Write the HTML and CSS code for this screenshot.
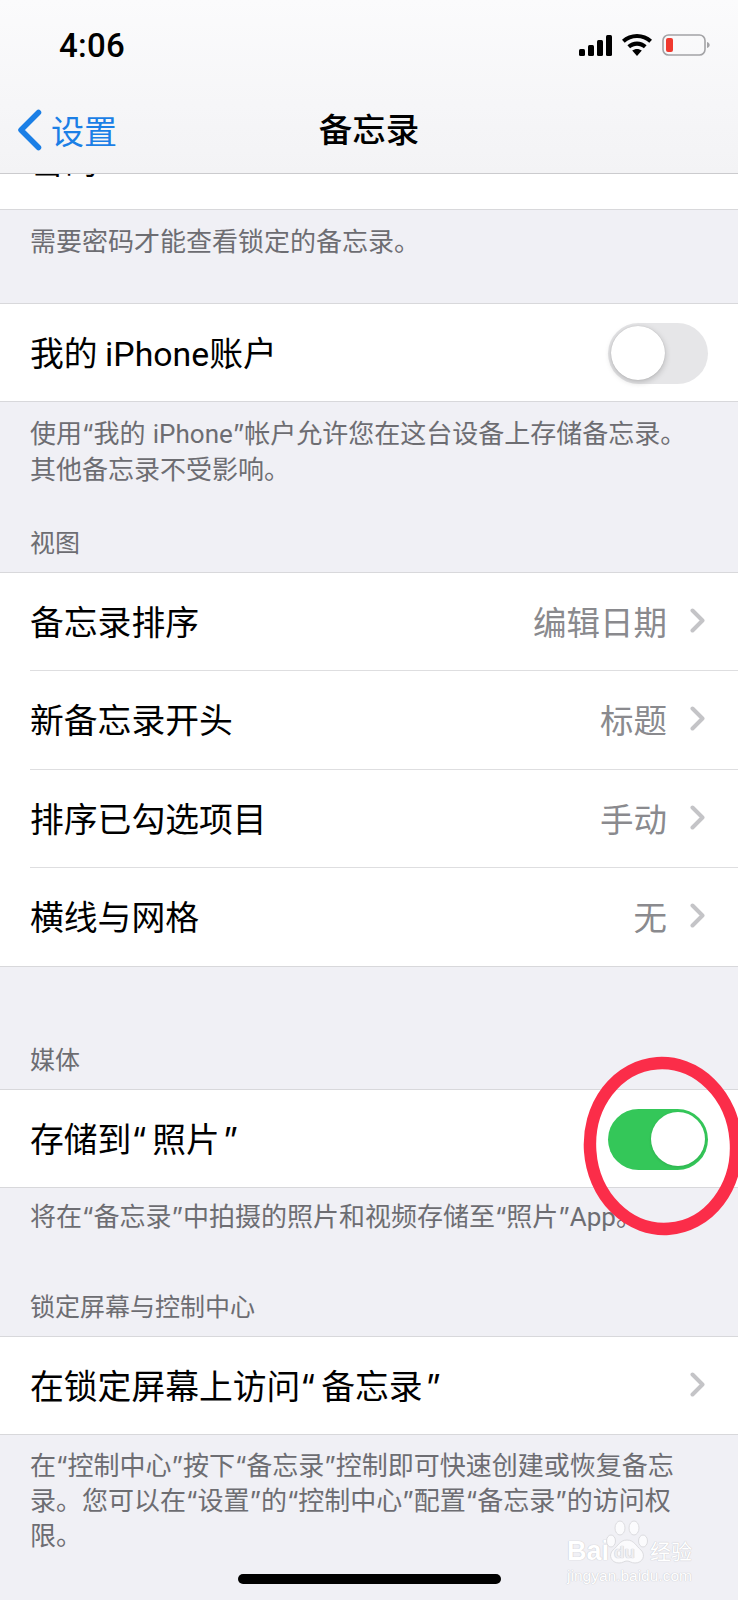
FILE: index.html
```html
<!DOCTYPE html>
<html lang="zh-CN">
<head>
<meta charset="utf-8">
<title>备忘录</title>
<link rel="stylesheet" href="styles.css">
</head>
<body>
<div class="screen">
  <header class="topbar">
    <div class="status">
      <span class="time">4:06</span>
      <div class="status-icons">
        <svg class="signal" viewBox="0 0 33 21" width="33" height="21"><rect x="0" y="14" width="6" height="7" rx="1.5"/><rect x="9" y="10" width="6" height="11" rx="1.5"/><rect x="18" y="5" width="6" height="16" rx="1.5"/><rect x="27" y="0" width="6" height="21" rx="1.5"/></svg>
        <svg class="wifi" viewBox="0 0 30 22" width="30" height="22"><path d="M15 22l-4.8-5.4c2.8-2.2 6.8-2.2 9.6 0z"/><path d="M15 7.6c3.7 0 7 1.4 9.6 3.7l-2.7 3c-1.9-1.6-4.3-2.6-6.9-2.6s-5 1-6.9 2.6l-2.7-3C8 9 11.300 7.600 15 7.600z"/><path d="M15 0c5.800 0 11 2.200 15 5.800l-2.700 3C24 5.800 19.700 4 15 4S6 5.800 2.700 8.800L0 5.800C4 2.200 9.200 0 15 0z"/></svg>
        <svg class="battery" viewBox="0 0 48 22" width="48" height="22"><rect x="1" y="1" width="42" height="20" rx="5.500" fill="none" stroke="#a3a3a6" stroke-width="1.600"/><rect x="4" y="4" width="7" height="14" rx="2" fill="#f0392f"/><path d="M45 8c1.800.5 2.700 1.700 2.700 3s-.9 2.500-2.700 3z" fill="#a3a3a6"/></svg>
      </div>
    </div>
    <nav class="nav">
      <a class="back">
        <svg viewBox="0 0 26 42" width="26" height="42"><path d="M22.500 3.500L5 21l17.500 17.500" fill="none" stroke="currentColor" stroke-width="5.500" stroke-linecap="round" stroke-linejoin="round"/></svg>
        <span>设置</span>
      </a>
      <h1 class="title">备忘录</h1>
    </nav>
  </header>

  <main>
    <div class="clipped-row"><span>密码</span></div>
    <p class="note note-first">需要密码才能查看锁定的备忘录。</p>

    <section class="group group-account">
      <div class="row">
        <span class="label">我的 <span class="latin">iPhone</span>账户</span>
        <span class="switch"><span class="knob"></span></span>
      </div>
    </section>
    <p class="note">使用“我的 <span class="latin">iPhone</span>”帐户允许您在这台设备上存储备忘录。<br>其他备忘录不受影响。</p>

    <h2 class="caption caption-view">视图</h2>
    <section class="group">
      <div class="row inset">
        <span class="label">备忘录排序</span>
        <span class="value">编辑日期</span>
        <svg class="chev" viewBox="0 0 16 25" width="16" height="25"><path d="M2.500 2.500l10 10-10 10" /></svg>
      </div>
      <div class="row inset">
        <span class="label">新备忘录开头</span>
        <span class="value">标题</span>
        <svg class="chev" viewBox="0 0 16 25" width="16" height="25"><path d="M2.500 2.500l10 10-10 10" /></svg>
      </div>
      <div class="row inset">
        <span class="label">排序已勾选项目</span>
        <span class="value">手动</span>
        <svg class="chev" viewBox="0 0 16 25" width="16" height="25"><path d="M2.500 2.500l10 10-10 10" /></svg>
      </div>
      <div class="row inset">
        <span class="label">横线与网格</span>
        <span class="value">无</span>
        <svg class="chev" viewBox="0 0 16 25" width="16" height="25"><path d="M2.500 2.500l10 10-10 10" /></svg>
      </div>
    </section>

    <h2 class="caption caption-media">媒体</h2>
    <section class="group">
      <div class="row">
        <span class="label">存储到“<span class="quoted">照片</span>”</span>
        <span class="switch on"><span class="knob"></span></span>
      </div>
    </section>
    <p class="note note-single">将在“备忘录”中拍摄的照片和视频存储至“照片”<span class="latin">App</span>。</p>

    <h2 class="caption caption-lock">锁定屏幕与控制中心</h2>
    <section class="group">
      <div class="row">
        <span class="label">在锁定屏幕上访问“<span class="quoted">备忘录</span>”</span>
        <svg class="chev" viewBox="0 0 16 25" width="16" height="25"><path d="M2.500 2.500l10 10-10 10" /></svg>
      </div>
    </section>
    <p class="note note-last">在“控制中心”按下“备忘录”控制即可快速创建或恢复备忘录。您可以在“设置”的“控制中心”配置“备忘录”的访问权限。</p>
  </main>

  <svg class="ring" viewBox="0 0 160 182" width="160" height="182"><ellipse cx="81" cy="90" rx="73" ry="83" fill="none" stroke="#fb2d49" stroke-width="12.500" transform="rotate(-4 81 90)"/></svg>

  <div class="watermark">
    <div class="wm-logo">
      <span class="wm-bai">Bai</span>
      <span class="wm-paw">
        <svg viewBox="0 0 44 50" width="44" height="50"><g fill="#fff" fill-opacity=".75" stroke="#dcdce0" stroke-width="1"><ellipse cx="6" cy="21" rx="4.500" ry="6"/><ellipse cx="15" cy="8" rx="5" ry="7"/><ellipse cx="29" cy="8" rx="5" ry="7"/><ellipse cx="38" cy="21" rx="4.500" ry="6"/><path d="M22 20c7 0 9 6 14 10 5 5 2 13-6 13-4 0-5-2-8-2s-4 2-8 2c-8 0-11-8-6-13 5-4 7-10 14-10z"/></g></svg>
        <span class="wm-du">du</span>
      </span>
      <span class="wm-jy">经验</span>
    </div>
    <div class="wm-url">jingyan.baidu.com</div>
  </div>

  <div class="home-bar"></div>
</div>
</body>
</html>
```

FILE: styles.css
```css
* { box-sizing: border-box; }
html, body { margin: 0; padding: 0; }
body {
  width: 738px;
  height: 1600px;
  overflow: hidden;
  background: #f0f0f5;
  font-family: Inter, "Noto Sans CJK SC", sans-serif;
  color: #000;
}
.screen { position: relative; width: 738px; height: 1600px; overflow: hidden; background: #f0f0f5; }
.latin { font-family: Roboto, sans-serif; }
.label .latin { margin-left: -2px; }
.quoted { margin: 0 3px 0 6px; }

.topbar {
  height: 174px;
  background: linear-gradient(#fbfbfc, #f6f6f8 60%, #f3f3f5);
  border-bottom: 1px solid #cbcbce;
  display: flex;
  flex-direction: column;
}
.status {
  height: 90px;
  display: flex;
  align-items: center;
  justify-content: space-between;
  padding: 0 28px 0 59px;
}
.time { font-family: Roboto, sans-serif; font-size: 33px; font-weight: 500; letter-spacing: .3px; color: #000; }
.status-icons { display: flex; align-items: center; gap: 10px; }
.signal, .wifi { fill: #000; display: block; }
.battery { display: block; }

.nav {
  position: relative;
  flex: 1;
  display: flex;
  align-items: center;
  justify-content: center;
  padding-bottom: 4px;
}
.back {
  position: absolute;
  left: 16px;
  top: 16px;
  display: flex;
  align-items: center;
  gap: 9px;
  color: #1b7fe6;
  font-size: 33px;
}
.back svg { display: block; }
.title { margin: 0; font-size: 33.500px; font-weight: 500; line-height: 40px; }

.clipped-row {
  height: 36px;
  background: #fff;
  border-bottom: 1px solid #d8d8db;
  overflow: hidden;
  padding-left: 30px;
  font-size: 34px;
  line-height: 40px;
}
.clipped-row span { display: block; margin-top: -32px; }

.note {
  margin: 0;
  padding: 14px 30px 0;
  font-size: 26px;
  line-height: 35px;
  color: #6d6d72;
}
.note-first { height: 93px; }
.note-single { height: 11px; padding-top: 11px; white-space: nowrap; }
.note-last { padding-top: 13px; }

.caption {
  margin: 0;
  padding: 0 30px 11px;
  font-size: 25px;
  line-height: 35px;
  font-weight: 400;
  color: #6d6d72;
}
.caption-view { margin-top: 39px; }
.caption-media { margin-top: 76px; }
.caption-lock { margin-top: 91px; }

.group {
  background: #fff;
  border-top: 1px solid #d8d8db;
  border-bottom: 1px solid #d8d8db;
}
.row {
  height: 97px;
  display: flex;
  align-items: center;
  padding: 0 30px 2px;
  font-size: 33.800px;
}
.row.inset { position: relative; height: 98.300px; padding-bottom: 3px; }
.row.inset:not(:last-child)::after {
  content: "";
  position: absolute;
  left: 30px;
  right: 0;
  bottom: 0;
  height: 1px;
  background: #dedee0;
}
.label { flex: 1; white-space: nowrap; }
.value { color: #8a8a8e; margin-right: 23px; font-size: 33.500px; }
.chev { display: block; flex: none; margin-right: 2px; }
.chev path { fill: none; stroke: #c4c4c7; stroke-width: 4px; stroke-linecap: round; stroke-linejoin: round; }

.switch {
  position: relative;
  flex: none;
  width: 100px;
  height: 61px;
  margin-top: 4px;
  border-radius: 31px;
  background: #e6e6e8;
  display: block;
}
.switch .knob {
  position: absolute;
  left: 3px;
  top: 3px;
  width: 54px;
  height: 54px;
  border-radius: 50%;
  background: #fff;
  box-shadow: 0 2px 6px rgba(0,0,0,.22), 0 0 1px rgba(0,0,0,.2);
}
.switch.on { background: #34c759; }
.switch.on .knob { left: 43px; box-shadow: 0 1px 3px rgba(0,0,0,.12); }

.ring { position: absolute; left: 582px; top: 1056px; display: block; }

.watermark {
  position: absolute;
  left: 567px;
  top: 1520px;
  width: 132px;
  color: #fff;
  text-shadow: 0 0 1px #c9c9ce, 0 0 1px #c9c9ce;
}
.wm-logo { display: flex; align-items: flex-end; height: 46px; }
.wm-bai { font-family: "Liberation Sans", sans-serif; font-weight: 700; font-size: 27px; line-height: 30px; letter-spacing: 0; }
.wm-paw { position: relative; display: block; width: 44px; height: 46px; margin-left: -4px; }
.wm-paw svg { display: block; }
.wm-du { position: absolute; left: 9px; bottom: 3px; font-family: "Liberation Sans", sans-serif; font-size: 17px; line-height: 20px; font-weight: 700; color: #eeeef2; }
.wm-jy { font-size: 21px; line-height: 28px; margin-left: 1px; white-space: nowrap; }
.wm-url { font-family: "Liberation Sans", sans-serif; font-size: 15.500px; line-height: 18px; white-space: nowrap; margin-top: 1px; }

.home-bar {
  position: absolute;
  left: 238px;
  top: 1574px;
  width: 263px;
  height: 10px;
  border-radius: 5px;
  background: #000;
}
```
